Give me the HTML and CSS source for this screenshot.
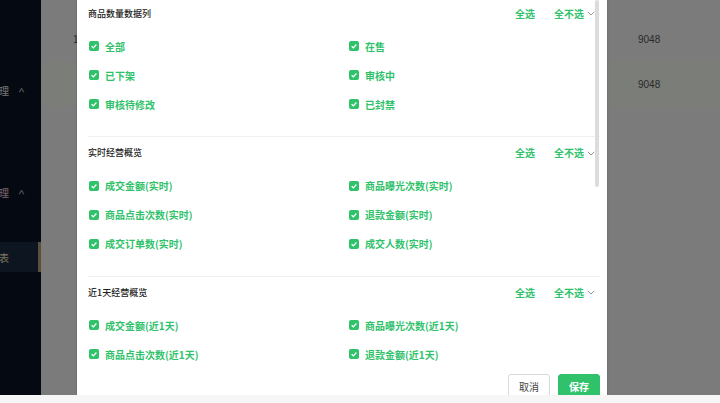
FILE: index.html
```html
<!DOCTYPE html>
<html lang="zh-CN">
<head>
<meta charset="utf-8">
<title>数据列设置</title>
<link rel="stylesheet" href="styles.css">
</head>
<body>
<div class="app">
  <aside class="sidebar">
    <div class="menu-group first"><span class="menu-text">理</span><span class="menu-arrow">^</span></div>
    <div class="menu-group second"><span class="menu-text pink">理</span><span class="menu-arrow">^</span></div>
    <div class="menu-item active"><span class="menu-text">表</span></div>
  </aside>
  <main class="main">
    <div class="table">
      <div class="trow r1"><span class="cell-first">1</span><span class="cell-last">9048</span></div>
      <div class="trow r2"><span class="cell-first"></span><span class="cell-last">9048</span></div>
    </div>
  </main>
  <div class="mask"></div>
  <div class="modal">
    <div class="modal-body">
      <section class="group">
        <div class="group-head">
          <span class="group-title">商品数量数据列</span>
          <div class="group-actions"><span class="act">全选</span><span class="act">全不选</span><svg class="chev" viewBox="0 0 8 5" width="8" height="5"><path d="M0.8 0.8 L4 4 L7.2 0.8" fill="none" stroke="#9a9a9a" stroke-width="1"/></svg></div>
        </div>
        <div class="grid">
          <label class="opt"><span class="cb"><svg viewBox="0 0 10 10"><path d="M2.6 5.2 L4.3 6.8 L7.4 3.5" fill="none" stroke="#fff" stroke-width="1.2"/></svg></span>全部</label>
          <label class="opt"><span class="cb"><svg viewBox="0 0 10 10"><path d="M2.6 5.2 L4.3 6.8 L7.4 3.5" fill="none" stroke="#fff" stroke-width="1.2"/></svg></span>在售</label>
          <label class="opt"><span class="cb"><svg viewBox="0 0 10 10"><path d="M2.6 5.2 L4.3 6.8 L7.4 3.5" fill="none" stroke="#fff" stroke-width="1.2"/></svg></span>已下架</label>
          <label class="opt"><span class="cb"><svg viewBox="0 0 10 10"><path d="M2.6 5.2 L4.3 6.8 L7.4 3.5" fill="none" stroke="#fff" stroke-width="1.2"/></svg></span>审核中</label>
          <label class="opt"><span class="cb"><svg viewBox="0 0 10 10"><path d="M2.6 5.2 L4.3 6.8 L7.4 3.5" fill="none" stroke="#fff" stroke-width="1.2"/></svg></span>审核待修改</label>
          <label class="opt"><span class="cb"><svg viewBox="0 0 10 10"><path d="M2.6 5.2 L4.3 6.8 L7.4 3.5" fill="none" stroke="#fff" stroke-width="1.2"/></svg></span>已封禁</label>
        </div>
      </section>
      <section class="group">
        <div class="group-head">
          <span class="group-title">实时经营概览</span>
          <div class="group-actions"><span class="act">全选</span><span class="act">全不选</span><svg class="chev" viewBox="0 0 8 5" width="8" height="5"><path d="M0.8 0.8 L4 4 L7.2 0.8" fill="none" stroke="#9a9a9a" stroke-width="1"/></svg></div>
        </div>
        <div class="grid">
          <label class="opt"><span class="cb"><svg viewBox="0 0 10 10"><path d="M2.6 5.2 L4.3 6.8 L7.4 3.5" fill="none" stroke="#fff" stroke-width="1.2"/></svg></span>成交金额(实时)</label>
          <label class="opt"><span class="cb"><svg viewBox="0 0 10 10"><path d="M2.6 5.2 L4.3 6.8 L7.4 3.5" fill="none" stroke="#fff" stroke-width="1.2"/></svg></span>商品曝光次数(实时)</label>
          <label class="opt"><span class="cb"><svg viewBox="0 0 10 10"><path d="M2.6 5.2 L4.3 6.8 L7.4 3.5" fill="none" stroke="#fff" stroke-width="1.2"/></svg></span>商品点击次数(实时)</label>
          <label class="opt"><span class="cb"><svg viewBox="0 0 10 10"><path d="M2.6 5.2 L4.3 6.8 L7.4 3.5" fill="none" stroke="#fff" stroke-width="1.2"/></svg></span>退款金额(实时)</label>
          <label class="opt"><span class="cb"><svg viewBox="0 0 10 10"><path d="M2.6 5.2 L4.3 6.8 L7.4 3.5" fill="none" stroke="#fff" stroke-width="1.2"/></svg></span>成交订单数(实时)</label>
          <label class="opt"><span class="cb"><svg viewBox="0 0 10 10"><path d="M2.6 5.2 L4.3 6.8 L7.4 3.5" fill="none" stroke="#fff" stroke-width="1.2"/></svg></span>成交人数(实时)</label>
        </div>
      </section>
      <section class="group">
        <div class="group-head">
          <span class="group-title">近1天经营概览</span>
          <div class="group-actions"><span class="act">全选</span><span class="act">全不选</span><svg class="chev" viewBox="0 0 8 5" width="8" height="5"><path d="M0.8 0.8 L4 4 L7.2 0.8" fill="none" stroke="#9a9a9a" stroke-width="1"/></svg></div>
        </div>
        <div class="grid">
          <label class="opt"><span class="cb"><svg viewBox="0 0 10 10"><path d="M2.6 5.2 L4.3 6.8 L7.4 3.5" fill="none" stroke="#fff" stroke-width="1.2"/></svg></span>成交金额(近1天)</label>
          <label class="opt"><span class="cb"><svg viewBox="0 0 10 10"><path d="M2.6 5.2 L4.3 6.8 L7.4 3.5" fill="none" stroke="#fff" stroke-width="1.2"/></svg></span>商品曝光次数(近1天)</label>
          <label class="opt"><span class="cb"><svg viewBox="0 0 10 10"><path d="M2.6 5.2 L4.3 6.8 L7.4 3.5" fill="none" stroke="#fff" stroke-width="1.2"/></svg></span>商品点击次数(近1天)</label>
          <label class="opt"><span class="cb"><svg viewBox="0 0 10 10"><path d="M2.6 5.2 L4.3 6.8 L7.4 3.5" fill="none" stroke="#fff" stroke-width="1.2"/></svg></span>退款金额(近1天)</label>
        </div>
      </section>
      <div class="scroll-thumb"></div>
    </div>
    <div class="modal-footer">
      <button class="btn btn-cancel">取消</button>
      <button class="btn btn-save">保存</button>
    </div>
  </div>
</div>
</body>
</html>
```
FILE: styles.css
```css
* { box-sizing: border-box; }
html, body { margin: 0; padding: 0; }
body {
  width: 720px;
  height: 403px;
  background: #f6f6f6;
  font-family: "Noto Sans CJK SC", "Noto Sans", "Liberation Sans", sans-serif;
  overflow: hidden;
}
.app {
  position: relative;
  height: 395px;
  display: flex;
  overflow: hidden;
}
.sidebar {
  width: 41px;
  flex: none;
  background: #0b1424;
  color: #e8e8e8;
  font-size: 10px;
  display: flex;
  flex-direction: column;
}
.menu-group {
  height: 28px;
  display: flex;
  align-items: center;
  gap: 10px;
}
.menu-group.first { margin-top: 76px; }
.menu-group.second { margin-top: 74px; }
.menu-text { margin-left: -1px; }
.menu-text.pink { color: #f0c8d8; }
.menu-arrow { font-size: 9px; color: #c8c8c8; transform: scaleX(1.4); padding-top: 3px; }
.menu-item {
  margin-top: 36px;
  height: 30px;
  display: flex;
  align-items: center;
  background: #1b2b42;
  border-right: 3px solid #b8a070;
  color: #f4e2c0;
}
.main {
  flex: 1;
  background: #f7f7f7;
  color: #555;
  font-family: "Liberation Sans", "Noto Sans", sans-serif;
  font-size: 10px;
}
.table { padding-top: 16px; }
.trow {
  display: grid;
  grid-template-columns: 1fr 82px;
  align-items: center;
  height: 46px;
}
.trow.r2 { height: 44px; background: #f5fbf1; }
.cell-first { padding-left: 32px; }
.mask {
  position: absolute;
  inset: 0;
  background: rgba(0, 0, 0, 0.5);
}
.modal {
  position: absolute;
  left: 77px;
  top: 0;
  width: 530px;
  height: 395px;
  background: #fff;
  display: flex;
  flex-direction: column;
  box-shadow: 0 0 2px rgba(0,0,0,0.25);
}
.modal-body {
  position: relative;
  flex: 1;
  overflow: hidden;
  width: 523px;
}
.scroll-thumb {
  position: absolute;
  right: 1px;
  top: 0;
  width: 4px;
  height: 187px;
  background: #dcdcdc;
  border-radius: 2px;
}
.group {
  padding: 9px 5px 17.5px 11px;
}
.group:first-child { padding-top: 6px; }
.group + .group {
  border-top: 1px solid #f0f0f0;
  margin-left: 11px;
  padding-left: 0;
  padding-top: 8.5px;
}
.group-head {
  height: 14px;
  display: flex;
  align-items: center;
  justify-content: space-between;
  margin-bottom: 11.5px;
}
.group-title {
  font-size: 9px;
  color: #222;
  font-weight: 500;
}
.group-actions {
  display: flex;
  align-items: center;
  font-size: 10px;
  color: #2fc26b;
  font-weight: 700;
}
.act + .act { margin-left: 19px; }
.chev { margin-left: 3px; margin-top: 1px; }
.grid {
  display: grid;
  grid-template-columns: 260px 1fr;
  grid-auto-rows: 29px;
}
.opt {
  display: flex;
  align-items: center;
  gap: 6px;
  padding-left: 1px;
  font-size: 10px;
  color: #2fc26b;
  font-weight: 700;
}
.cb {
  width: 10px;
  height: 10px;
  border-radius: 2px;
  background: #2fc26b;
  display: flex;
}
.cb svg { width: 10px; height: 10px; }
.modal-footer {
  flex: none;
  height: 27px;
  padding: 6px 7px 0 0;
  display: flex;
  justify-content: flex-end;
  align-items: flex-start;
  gap: 8px;
}
.btn {
  width: 42px;
  height: 24px;
  font-family: inherit;
  font-size: 10px;
  border-radius: 3px;
  padding: 0;
}
.btn-cancel {
  background: #fff;
  border: 1px solid #d9d9d9;
  color: #444;
}
.btn-save {
  background: #2fc26b;
  border: 1px solid #2fc26b;
  color: #fff;
  font-weight: 700;
}
```
